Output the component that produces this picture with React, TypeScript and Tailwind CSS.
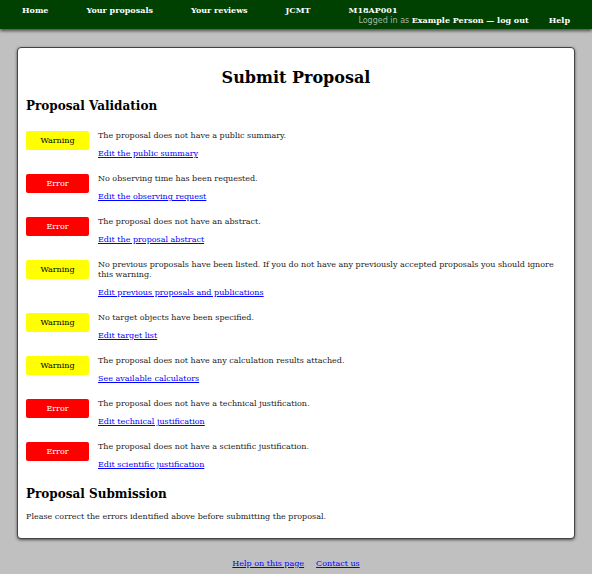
import React from "react";

const rows: { kind: "Warning" | "Error"; msg: string; link: string }[] = [
  { kind: "Warning", msg: "The proposal does not have a public summary.", link: "Edit the public summary" },
  { kind: "Error", msg: "No observing time has been requested.", link: "Edit the observing request" },
  { kind: "Error", msg: "The proposal does not have an abstract.", link: "Edit the proposal abstract" },
  {
    kind: "Warning",
    msg: "No previous proposals have been listed. If you do not have any previously accepted proposals you should ignore this warning.",
    link: "Edit previous proposals and publications",
  },
  { kind: "Warning", msg: "No target objects have been specified.", link: "Edit target list" },
  { kind: "Warning", msg: "The proposal does not have any calculation results attached.", link: "See available calculators" },
  { kind: "Error", msg: "The proposal does not have a technical justification.", link: "Edit technical justification" },
  { kind: "Error", msg: "The proposal does not have a scientific justification.", link: "Edit scientific justification" },
];

export default function App() {
  return (
    <div className="min-h-[574px] bg-[#c0c0c0] text-[8px] leading-[10px] text-[#222] [font-family:'DejaVu_Serif',serif]">
      <div className="h-[29px] bg-[#004000] shadow-[0_2px_3px_rgba(0,0,0,0.6)] text-white font-bold pt-[5px]">
        <div className="flex pl-[22px] gap-[38px]">
          <span>Home</span>
          <span>Your proposals</span>
          <span>Your reviews</span>
          <span>JCMT</span>
          <span>M18AP001</span>
        </div>
        <div className="flex justify-end pr-[22px] gap-[20px]">
          <span>
            <span className="font-normal text-[#a8b8a8] [font-family:'DejaVu_Sans',sans-serif]">Logged in as </span>
            Example Person — log out
          </span>
          <span>Help</span>
        </div>
      </div>
      <div className="mx-[17px] mt-[18px] bg-white rounded-[4px] border border-[#444] shadow-[0_1px_3px_rgba(0,0,0,0.6)] px-[8px] pt-[20px] pb-[16px]">
        <h1 className="text-center font-bold text-[16px] leading-[20px] text-black">Submit Proposal</h1>
        <h2 className="font-bold text-[12px] leading-[15px] text-black mt-[11px]">Proposal Validation</h2>
        <div className="mt-[17px] flex flex-col gap-[15px]">
          {rows.map((r, i) => (
            <div key={i} className="flex items-start">
              <div
                className={
                  "w-[63px] h-[19px] rounded-[2px] flex items-center justify-center shrink-0 " +
                  (r.kind === "Warning" ? "bg-[#ffff00] text-black" : "bg-[#ff0000] text-white")
                }
              >
                {r.kind}
              </div>
              <div className="ml-[9px]">
                <div>{r.msg}</div>
                <a href="#" className="block mt-[8px] text-[#0000ff] underline">
                  {r.link}
                </a>
              </div>
            </div>
          ))}
        </div>
        <h2 className="font-bold text-[12px] leading-[15px] text-black mt-[17px]">Proposal Submission</h2>
        <p className="mt-[10px]">Please correct the errors identified above before submitting the proposal.</p>
      </div>
      <div className="flex justify-center gap-[12px] mt-[20px] pb-[4px]">
        <a href="#" className="text-[#0000ff] underline">Help on this page</a>
        <a href="#" className="text-[#0000ff] underline">Contact us</a>
      </div>
    </div>
  );
}
